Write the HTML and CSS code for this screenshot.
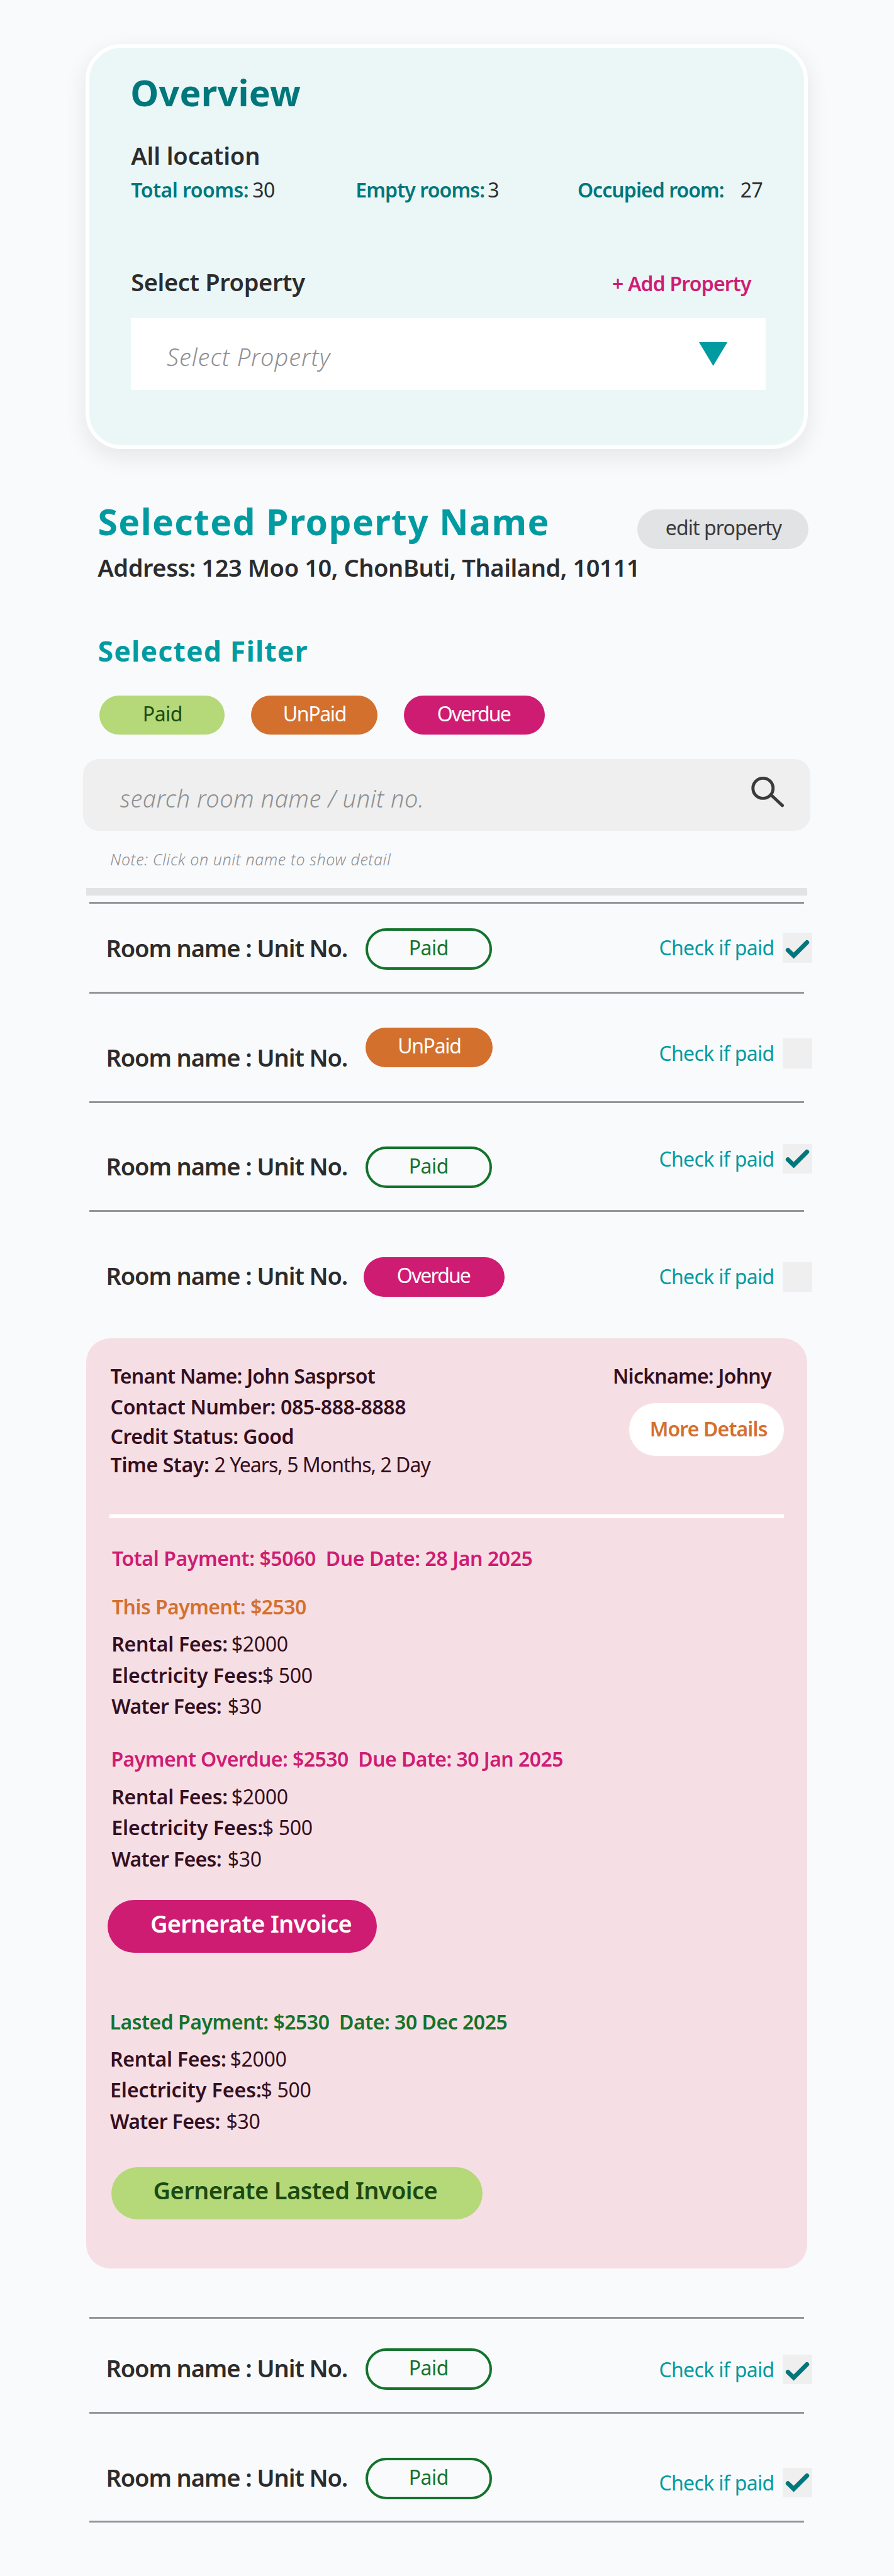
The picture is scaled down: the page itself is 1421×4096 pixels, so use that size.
FILE: index.html
```html
<!DOCTYPE html>
<html lang="en">
<head>
<meta charset="utf-8">
<title>Property Overview</title>
<link rel="stylesheet" href="styles.css">
</head>
<body>
<svg class="defs" width="0" height="0" aria-hidden="true">
  <symbol id="tick" viewBox="0 0 60 60"><path d="M10.7 35.2 22.3 46.4 49 19.8" fill="none" stroke="#00777c" stroke-width="9" stroke-linecap="round" stroke-linejoin="miter"/></symbol>
</svg>

<section class="overview">
  <h1 class="overview-title">Overview</h1>
  <h2 class="sub all-location">All location</h2>
  <div class="stats">
    <div class="stat stat-total"><span class="stat-label">Total rooms:</span><span>30</span></div>
    <div class="stat stat-empty"><span class="stat-label">Empty rooms:</span><span>3</span></div>
    <div class="stat stat-occupied"><span class="stat-label">Occupied room:</span><span>27</span></div>
  </div>
  <div class="select-head">
    <h2 class="sub select-title">Select Property</h2>
    <a class="add-property">+ Add Property</a>
  </div>
  <div class="select-box">
    <span class="select-placeholder">Select Property</span>
    <svg class="caret" viewBox="0 0 45.3 37.8"><path d="M0 0H45.3L22.6 37.8Z" fill="#009ba1"/></svg>
  </div>
</section>

<section class="property">
  <div class="property-info">
    <h1 class="property-name">Selected Property Name</h1>
    <p class="sub address">Address: 123 Moo 10, ChonButi, Thailand, 10111</p>
  </div>
  <a class="edit-property">edit property</a>
</section>

<h2 class="filter-title">Selected Filter</h2>
<div class="filters">
  <span class="pill pill-green">Paid</span>
  <span class="pill pill-unpaid">UnPaid</span>
  <span class="pill pill-overdue">Overdue</span>
</div>

<div class="search">
  <span class="search-text">search room name / unit no.</span>
  <svg class="search-icon" viewBox="0 0 60 56" fill="none" stroke="#3b3b3c" stroke-width="4.9" stroke-linecap="round"><circle cx="22.8" cy="23.4" r="16"/><path d="M35.2 33.6 53.6 50.9"/></svg>
</div>
<p class="note">Note: Click on unit name to show detail</p>
<div class="bar"></div>

<div class="rooms rooms-top">
  <div class="room room-1">
    <span class="sub room-name">Room name : Unit No.</span>
    <span class="pill pill-paid">Paid</span>
    <span class="check-label">Check if paid</span>
    <span class="box"><svg class="tick"><use href="#tick"/></svg></span>
  </div>
  <div class="room room-2">
    <span class="sub room-name">Room name : Unit No.</span>
    <span class="pill pill-unpaid">UnPaid</span>
    <span class="check-label">Check if paid</span>
    <span class="box"></span>
  </div>
  <div class="room room-3">
    <span class="sub room-name">Room name : Unit No.</span>
    <span class="pill pill-paid">Paid</span>
    <span class="check-label">Check if paid</span>
    <span class="box box-high"><svg class="tick"><use href="#tick"/></svg></span>
  </div>
  <div class="room room-4">
    <span class="sub room-name">Room name : Unit No.</span>
    <span class="pill pill-overdue">Overdue</span>
    <span class="check-label">Check if paid</span>
    <span class="box"></span>
  </div>
</div>

<section class="detail">
  <div class="tenant">
    <div class="tenant-info">
      <p class="t-name">Tenant Name: John Sasprsot</p>
      <p class="t-contact">Contact Number: 085-888-8888</p>
      <p class="t-credit">Credit Status: Good</p>
      <p class="t-stay"><span class="stay-label">Time Stay:</span><span class="stay-value">2 Years, 5 Months, 2 Day</span></p>
    </div>
    <div class="tenant-side">
      <p class="nickname">Nickname: Johny</p>
      <a class="more">More Details</a>
    </div>
  </div>
  <hr class="divider">
  <p class="total">Total Payment: $5060  Due Date: 28 Jan 2025</p>
  <p class="this">This Payment: $2530</p>
  <div class="fees">
    <p><span class="fee-rental">Rental Fees:</span><span class="amount">$2000</span></p>
    <p><span class="fee-electric">Electricity Fees:</span><span class="amount">$ 500</span></p>
    <p><span class="fee-water">Water Fees:</span><span class="amount">$30</span></p>
  </div>
  <p class="overdue">Payment Overdue: $2530  Due Date: 30 Jan 2025</p>
  <div class="fees">
    <p><span class="fee-rental">Rental Fees:</span><span class="amount">$2000</span></p>
    <p><span class="fee-electric">Electricity Fees:</span><span class="amount">$ 500</span></p>
    <p><span class="fee-water">Water Fees:</span><span class="amount">$30</span></p>
  </div>
  <a class="invoice">Gernerate Invoice</a>
  <p class="lasted">Lasted Payment: $2530  Date: 30 Dec 2025</p>
  <div class="fees fees-last">
    <p><span class="fee-rental">Rental Fees:</span><span class="amount">$2000</span></p>
    <p><span class="fee-electric">Electricity Fees:</span><span class="amount">$ 500</span></p>
    <p><span class="fee-water">Water Fees:</span><span class="amount">$30</span></p>
  </div>
  <a class="invoice invoice-last">Gernerate Lasted Invoice</a>
</section>

<div class="rooms rooms-bottom">
  <div class="room room-5">
    <span class="sub room-name">Room name : Unit No.</span>
    <span class="pill pill-paid">Paid</span>
    <span class="check-label">Check if paid</span>
    <span class="box"><svg class="tick"><use href="#tick"/></svg></span>
  </div>
  <div class="room room-6">
    <span class="sub room-name">Room name : Unit No.</span>
    <span class="pill pill-paid">Paid</span>
    <span class="check-label">Check if paid</span>
    <span class="box box-high"><svg class="tick"><use href="#tick"/></svg></span>
  </div>
</div>
</body>
</html>
```
FILE: styles.css
```css
* { box-sizing: border-box; }

body {
  margin: 0;
  padding-top: 69.9px;
  height: 4096px;
  display: flex;
  flex-direction: column;
  align-items: flex-start;
  background: #f9fafc;
  color: #2c2c2d;
  font: 400 32px/40px "Noto Sans", sans-serif;
}

section, div, p, a, h1, h2 { flex-shrink: 0; }
h1, h2, p { margin: 0; white-space: pre; }
span, a { white-space: pre; }
svg { display: block; }
.defs { position: absolute; }

.sub { font-size: 38px; font-weight: 600; line-height: 40px; }

/* Overview card */
.overview {
  margin-left: 136.4px;
  width: 1147.4px;
  height: 644.2px;
  padding: 41.3px 60px 0 65.8px;
  border: 6.3px solid #fff;
  border-radius: 57px;
  background: #ebf7f7;
  box-shadow: 0 12px 36px rgba(20, 20, 20, .09);
}
.overview-title {
  font-size: 57px; line-height: 60px; font-weight: 700;
  letter-spacing: .3px; color: #00777c; margin-left: -1px;
}
.all-location { margin-top: 49.8px; letter-spacing: -.1px; }
.stats {
  display: grid;
  grid-template-columns: 357px 352.7px 1fr;
  margin-top: 15.4px;
}
.stat { display: flex; letter-spacing: -.6px; }
.stat-label { font-weight: 600; color: #00777c; }
.stat-total .stat-label { width: 193px; letter-spacing: -.49px; }
.stat-empty .stat-label { width: 210px; letter-spacing: -.88px; }
.stat-occupied .stat-label { width: 258.8px; letter-spacing: -.95px; }
.select-head { display: flex; justify-content: space-between; align-items: baseline; margin-top: 105.9px; width: 1008.7px; height: 40px; }
.select-title { letter-spacing: -.36px; }
.add-property { width: 243.9px; font-weight: 600; color: #cf1c73; letter-spacing: -.83px; }
.select-box {
  display: flex; justify-content: space-between; align-items: flex-start;
  width: 1008.7px; height: 113.3px; margin-top: 38.1px;
  padding: 0 61px 0 56.7px;
  background: #fff;
}
.select-placeholder { margin-top: 41px; font-size: 38px; font-style: italic; font-weight: 300; color: #8f9093; letter-spacing: 1px; }
.caret { width: 45.3px; height: 37.8px; margin-top: 37.8px; }

/* Selected property */
.property { display: flex; align-items: flex-start; margin: 85.4px 0 0 155.5px; }
.property-info { width: 857.5px; }
.property-name { font-size: 57px; line-height: 60px; font-weight: 700; color: #009ba1; letter-spacing: 1.35px; }
.address { margin: 22.7px 0 0 -.3px; letter-spacing: -.42px; }
.edit-property {
  width: 271.6px; height: 62.8px; margin-top: 10.9px; padding: 9px 0 0 44.8px;
  border-radius: 32px; background: #e2e3e5; color: #3b3b3c; letter-spacing: -.91px;
}
.filter-title { margin: 82.4px 0 0 155.5px; font-size: 44.5px; line-height: 60px; color: #009ba1; letter-spacing: 1.2px; }
.filters { display: flex; margin: 41px 0 0 158.3px; }

.pill { display: block; height: 62.7px; padding-top: 9.2px; border-radius: 33px; }
.pill-green { width: 199.1px; padding-left: 68.5px; background: #b5d878; color: #1b4b12; letter-spacing: -.52px; }
.pill-unpaid { width: 201.1px; padding-left: 50.7px; background: #d4702e; color: #fff; letter-spacing: -1.35px; }
.pill-overdue { width: 223.3px; padding-left: 52.4px; background: #cf1c73; color: #fff; letter-spacing: -1.89px; }
.pill-paid { width: 200.7px; height: 66px; padding: 6.8px 0 0 64.3px; border: 4px solid #13732c; color: #13732c; letter-spacing: -.52px; }
.filters .pill-unpaid { margin: 0 42.2px 0 41.6px; }

/* Search */
.search {
  display: flex; justify-content: space-between; align-items: flex-start;
  width: 1156.5px; height: 114.1px; margin: 38.8px 0 0 131.9px;
  padding: 0 38.4px 0 58.8px;
  border-radius: 25px; background: #eeefee;
}
.search-text { margin-top: 41.9px; font-size: 38px; font-style: italic; font-weight: 300; color: #8f9093; letter-spacing: .5px; }
.search-icon { width: 60px; height: 56px; margin-top: 22.9px; }
.note { margin: 24.9px 0 0 175px; font-size: 25px; font-style: italic; font-weight: 300; color: #8f9093; letter-spacing: .6px; }
.bar { width: 1145.8px; height: 11.7px; margin: 26px 0 0 137.2px; background: #e2e3e5; }

/* Room list */
.rooms { width: 1136.8px; margin-left: 141.7px; border-top: 3px solid #949598; }
.rooms-top { margin-top: 10.5px; height: 694px; }
.rooms-bottom { margin-top: 77.6px; }
.room {
  display: grid; grid-template-columns: 413.1px 466px 196.4px 46.8px;
  align-items: start;
  padding-left: 26.7px;
  border-bottom: 3px solid #949598;
}
.room-name { letter-spacing: -1.1px; }
.check-label { color: #009ba1; letter-spacing: -.68px; }
.box { height: 47.3px; background: #eeefee; }
.tick { width: 47.3px; height: 47.3px; }
.box-high .tick { margin-top: -2.8px; }

.room-1 { height: 143.1px; }
.room-1 .room-name { margin-top: 49.8px; }
.room-1 .pill { margin-top: 39.2px; }
.room-1 .check-label { margin-top: 49.9px; }
.room-1 .box { margin-top: 46.2px; }

.room-2 { height: 173.4px; }
.room-2 .room-name { margin-top: 80.5px; }
.room-2 .pill { margin-top: 53.6px; }
.room-2 .check-label { margin-top: 75.1px; }
.room-2 .box { margin-top: 71.1px; }

.room-3 { height: 173.4px; }
.room-3 .room-name { margin-top: 80.4px; }
.room-3 .pill { margin-top: 69.7px; }
.room-3 .check-label { margin-top: 69.2px; }
.room-3 .box { margin-top: 65.2px; }

.room-4 { height: 201.1px; border-bottom: 0; }
.room-4 .room-name { margin-top: 80.8px; }
.room-4 .pill { margin: 72px 0 0 -3px; }
.room-4 .check-label { margin-top: 83.2px; }
.room-4 .box { margin-top: 79.5px; }

.room-5 { height: 150.6px; }
.room-5 .room-name { margin-top: 58.1px; }
.room-5 .pill { margin-top: 47px; }
.room-5 .check-label { margin-top: 60.8px; }
.room-5 .box { margin-top: 56.6px; }

.room-6 { height: 173.5px; }
.room-6 .room-name { margin-top: 81.1px; }
.room-6 .pill { margin-top: 70px; }
.room-6 .check-label { margin-top: 90px; }
.room-6 .box { margin-top: 85.8px; }

/* Tenant detail */
.detail {
  display: flex; flex-direction: column; align-items: flex-start;
  width: 1145.8px; height: 1478.5px; margin-left: 137.2px;
  padding: 39.4px 36.9px 0;
  border-radius: 38px; background: #f6dfe4; color: #350f1f; font-weight: 600;
}
.tenant { display: flex; height: 181.9px; padding-left: 1.5px; }
.tenant-info { width: 798.4px; }
.t-name { letter-spacing: -.74px; }
.t-contact { margin-top: 9.9px; letter-spacing: -.35px; }
.t-credit { margin-top: 6.5px; letter-spacing: -.51px; }
.t-stay { display: flex; margin-top: 5.5px; }
.stay-label { width: 165px; letter-spacing: -.39px; }
.stay-value { font-weight: 400; letter-spacing: -1px; }
.nickname { letter-spacing: -.75px; }
.more {
  display: block; width: 245.9px; height: 84px; margin: 23.4px 0 0 26.2px; padding: 20.7px 0 0 32.5px;
  border-radius: 42px; background: #fff; color: #d4702e; letter-spacing: -.88px;
}
.divider { width: 1072px; height: 6px; margin: 58.1px 0 0; border: 0; background: #fff; flex-shrink: 0; }
.total { margin: 44.9px 0 0 3.8px; color: #cf1c73; letter-spacing: -.41px; }
.this { margin: 36.5px 0 0 3.8px; color: #d4702e; letter-spacing: -.55px; }
.fees { display: flex; flex-direction: column; gap: 9.3px; margin: 19.5px 0 0 3.1px; }
.fees p { display: flex; }
.fee-rental { width: 190.6px; letter-spacing: -.29px; }
.fee-electric { width: 239.6px; letter-spacing: 0; }
.fee-water { width: 184.5px; letter-spacing: -.64px; }
.amount { font-weight: 400; letter-spacing: -.3px; }
.overdue { margin: 44.4px 0 0 2.4px; color: #cf1c73; letter-spacing: -.56px; }
.invoice {
  width: 427.8px; height: 84px; margin: 45px 0 0 -3px; padding: 17.8px 0 0 67.9px;
  border-radius: 42px; background: #cf1c73; color: #fff;
  font-size: 38px; letter-spacing: -.75px;
}
.lasted { margin: 90px 0 0 .4px; color: #13732c; letter-spacing: -.5px; }
.fees-last { margin-left: .9px; }
.invoice-last { width: 590px; height: 83.5px; margin: 53px 0 0 2.6px; padding: 16.8px 0 0 66.9px; background: #b5d878; color: #1b4b12; letter-spacing: -.6px; }
```
